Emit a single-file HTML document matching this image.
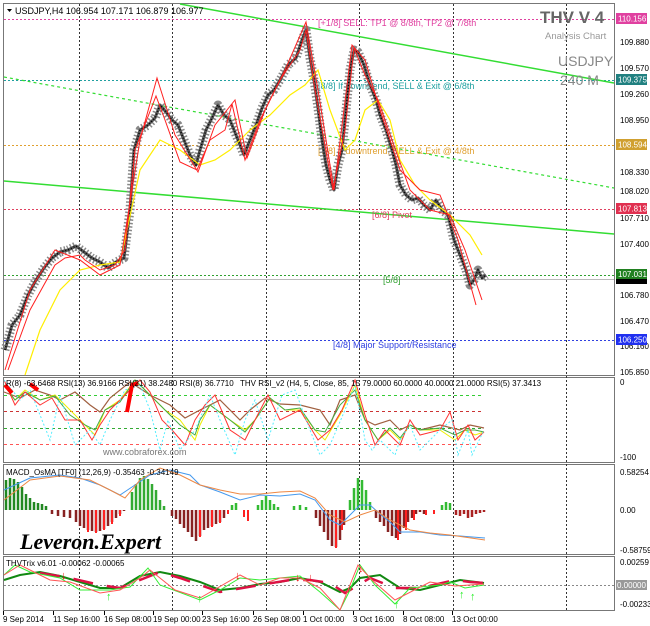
<!DOCTYPE html>
<html><head><meta charset="utf-8"><style>
html,body{margin:0;padding:0;background:#fff;width:650px;height:626px;overflow:hidden}
svg{display:block;font-family:"Liberation Sans",sans-serif}
</style></head><body>
<svg width="650" height="626" viewBox="0 0 650 626" xmlns="http://www.w3.org/2000/svg">
<defs>
<path id="px" d="M5 350L12 325L20 315L28 295L36 280L44 268L52 258L60 252L68 250L76 246L84 252L92 258L100 262L108 268L116 262L124 258L130 210L134 150L140 130L148 125L155 118L160 105L166 112L172 120L178 125L184 140L190 155L196 165L200 150L206 130L212 118L218 105L224 115L230 120L238 140L244 155L250 140L256 125L262 108L268 95L274 90L280 80L288 65L296 58L302 40L306 30L310 58L314 80L318 108L322 140L326 165L330 180L334 190L338 165L342 150L346 110L350 70L354 50L358 52L364 65L370 85L376 100L380 115L386 130L392 150L396 165L400 185L406 195L412 200L418 198L424 205L430 210L436 200L442 210L448 215L454 240L460 255L466 270L470 285L474 280L478 270L482 278L486 275"/>
</defs>
<rect width="650" height="626" fill="#fff"/>
<g fill="none" stroke="#777" stroke-width="1">
<rect x="3.5" y="3.5" width="611" height="372"/>
<rect x="3.5" y="377.5" width="611" height="85"/>
<rect x="3.5" y="464.5" width="611" height="90"/>
<rect x="3.5" y="556.5" width="611" height="54"/>
</g>
<g stroke="#333" stroke-width="1" stroke-dasharray="2,2">
<path d="M79.5 4V610M172.5 4V610M266.5 4V610M359.5 4V610M453.5 4V610M566.5 4V610"/>
</g>
<g stroke-width="1" stroke-dasharray="2,2" fill="none">
<path d="M4 19.5H614" stroke="#e040a0"/>
<path d="M4 80.5H614" stroke="#20a0a0"/>
<path d="M4 145.5H614" stroke="#e0a030"/>
<path d="M4 209.5H614" stroke="#e04060"/>
<path d="M4 275.5H614" stroke="#30a030"/>
<path d="M4 340.5H614" stroke="#3040e0"/>
</g>
<path d="M4 279.5H614" stroke="#bbb" stroke-width="1"/>
<g stroke="#33dd33" fill="none">
<path d="M180 4L614 83" stroke-width="1.5"/>
<path d="M4 77L614 188" stroke-width="1.2" stroke-dasharray="3,3"/>
<path d="M4 181L614 234" stroke-width="1.5"/>
</g>
<g font-size="9">
<text x="318" y="26" fill="#e040a0">[+1/8] SELL: TP1 @ 8/8th, TP2 @ 7/8th</text>
<text x="318" y="89" fill="#20a0a0">[8/8] If downtrend, SELL &amp; Exit @ 6/8th</text>
<text x="318" y="154" fill="#e0a030">[7/8] If downtrend, SELL &amp; Exit @ 4/8th</text>
<text x="372" y="218" fill="#e04060">[6/8] Pivot</text>
<text x="383" y="283" fill="#30a030">[5/8]</text>
<text x="333" y="348" fill="#3040e0">[4/8] Major Support/Resistance</text>
</g>
<use href="#px" fill="none" stroke="#888" stroke-width="9" stroke-linejoin="round" stroke-dasharray="1.5,2"/>
<use href="#px" fill="none" stroke="#555" stroke-width="3" stroke-linejoin="round"/>
<use href="#px" fill="none" stroke="#000" stroke-width="1.5" stroke-dasharray="1,2"/>
<path d="M25 375L40 330L60 290L80 270L100 265L120 262L140 170L160 140L180 150L200 165L215 160L230 150L250 130L270 115L290 95L305 85L318 70L330 110L345 150L355 140L365 110L378 100L390 120L400 160L415 185L430 200L450 215L470 235L482 255" fill="none" stroke="#ffee00" stroke-width="1.2"/>
<path d="M8 370L30 310L55 265L65 258L80 255L85 260L100 270L115 265L125 250L135 150L156 96L165 120L180 162L197 170L210 140L225 130L232 104L245 160L260 120L280 80L300 50L306 30L315 90L333 190L345 130L354 48L365 75L378 100L392 140L410 190L430 210L450 215L465 250L482 300" fill="none" stroke="#ff2020" stroke-width="1"/>
<path d="M5 370L30 290L55 250L80 260L100 275L120 265L140 140L157 78L175 135L198 172L215 125L235 100L247 158L265 110L285 70L306 22L318 90L334 190L352 45L365 60L380 110L400 170L420 190L440 195L458 240L476 305" fill="none" stroke="#ff2020" stroke-width="1"/>
<path d="M7 9L12 9L9.5 12Z" fill="#000"/>
<text x="15" y="14" font-size="9" fill="#000">USDJPY,H4  106.954 107.171 106.879 106.977</text>
<text x="540" y="23" font-size="17" font-weight="bold" fill="#666">THV V 4</text>
<text x="545" y="39" font-size="9.5" fill="#999">Analysis Chart</text>
<text x="558" y="66" font-size="14" fill="#888">USDJPY</text>
<text x="560" y="85" font-size="14" fill="#888">240 M</text>
<g font-size="8" fill="#000">
<text x="620" y="45">109.880</text><text x="620" y="71">109.570</text><text x="620" y="97">109.260</text>
<text x="620" y="123">108.950</text><text x="620" y="175">108.330</text><text x="620" y="194">108.020</text>
<text x="620" y="221">107.710</text><text x="620" y="247">107.400</text><text x="620" y="298">106.780</text>
<text x="620" y="324">106.470</text><text x="620" y="349">106.160</text><text x="620" y="375">105.850</text>
</g>
<g font-size="8" fill="#fff">
<rect x="616" y="13" width="31" height="11" fill="#e040a0"/><text x="618" y="21.5">110.156</text>
<rect x="616" y="74" width="31" height="11" fill="#208080"/><text x="618" y="82.5">109.375</text>
<rect x="616" y="139" width="31" height="11" fill="#d0a030"/><text x="618" y="147.5">108.594</text>
<rect x="616" y="203" width="31" height="11" fill="#e03050"/><text x="618" y="211.5">107.813</text>
<rect x="616" y="269" width="31" height="10" fill="#208020"/><text x="618" y="277">107.031</text>
<rect x="616" y="279" width="31" height="5" fill="#000"/>
<rect x="616" y="334" width="31" height="11" fill="#2030f0"/><text x="618" y="342.5">106.250</text>
</g>
<g stroke-dasharray="3,3" stroke-width="1">
<path d="M4 395.5H484" stroke="#33cc33"/>
<path d="M4 411.5H484" stroke="#cc3333"/>
<path d="M4 428.5H484" stroke="#33aa33"/>
<path d="M4 444.5H484" stroke="#ff5555"/>
</g>
<path d="M4 392L20 398L35 390L50 395L60 400L75 392L90 405L100 412L110 398L130 382L150 395L170 405L185 418L200 410L220 400L240 420L250 410L265 398L280 404L300 405L320 410L330 425L340 400L355 395L365 420L375 425L390 420L400 430L410 425L420 430L440 425L460 430L470 425L484 428" fill="none" stroke="#a06040" stroke-width="1.2"/>
<path d="M4 385L15 400L25 390L40 400L55 395L70 410L85 425L95 435L105 410L120 400L135 380L150 395L165 410L180 420L195 440L200 425L210 405L230 420L245 430L255 420L270 398L285 410L300 410L315 430L325 440L340 415L355 385L365 420L378 440L390 430L400 440L410 425L420 430L440 430L455 440L465 430L475 435L484 432" fill="none" stroke="#eeee00" stroke-width="1"/>
<path d="M4 385L15 400L25 392L40 400L55 396L70 415L85 425L95 430L105 410L120 402L135 380L150 395L165 410L180 425L195 435L200 420L210 405L230 420L245 432L255 420L270 398L285 410L300 408L315 430L325 432L340 405L355 390L365 420L378 440L390 428L400 438L410 425L420 430L440 428L455 435L465 430L475 430L484 432" fill="none" stroke="#44aa44" stroke-width="1"/>
<path d="M4 380L15 405L25 392L40 405L52 398L65 420L80 420L92 440L100 425L110 410L125 395L140 380L150 392L162 420L172 430L185 445L195 420L205 405L215 395L230 430L245 440L255 420L268 395L280 420L300 410L318 440L330 430L342 410L355 380L365 415L375 445L385 430L400 445L410 420L420 435L440 430L450 412L458 440L468 425L475 440L484 432" fill="none" stroke="#ff3333" stroke-width="1"/>
<path d="M4 380L20 400L30 390L50 440L60 395L75 445L90 430L100 445L110 420L125 390L140 385L150 410L160 450L168 420L180 450L195 430L210 395L220 420L235 455L245 420L255 400L268 440L282 395L295 390L310 430L320 455L330 445L345 410L355 385L365 440L372 450L380 440L395 455L400 440L410 425L420 450L440 430L452 420L458 455L468 430L472 455L484 430" fill="none" stroke="#55eeff" stroke-width="1" stroke-dasharray="2,2"/>
<path d="M5 385L12 393M30 384L38 390M127 412L132 385L138 383" fill="none" stroke="#ff0000" stroke-width="4"/>
<g font-size="8" fill="#000">
<text x="6" y="386">R(8) -63.6468  RSI(13) 36.9166  RSI(21) 38.2480  RSI(8) 36.7710</text>
<text x="240" y="386">THV RSI_v2   (H4, 5, Close, 85, 15 79.0000 60.0000 40.0000 21.0000  RSI(5) 37.3413</text>
<text x="620" y="385">0</text><text x="620" y="460">-100</text>
</g>
<text x="103" y="455" font-size="9" fill="#777">www.cobraforex.com</text>
<g>
<path d="M6 510V480M10 510V478M14 510V479M18 510V482M22 510V487M26 510V494M30 510V498M34 510V502M38 510V503M42 510V504M46 510V506M50 510V510" stroke="#228822" stroke-width="2.5"/>
<path d="M52 510V514M58 510V516M64 510V517M70 510V518M76 510V522M80 510V526M84 510V528M88 510V530M92 510V531M96 510V532M100 510V531M104 510V529M108 510V526M112 510V522M116 510V518M120 510V514M124 510V511" stroke="#882222" stroke-width="2.5"/>
<path d="M88 510V532M96 510V533M104 510V530M112 510V524M120 510V516" stroke="#ff2222" stroke-width="2"/>
<path d="M132 510V492M136 510V484M140 510V478M144 510V476M148 510V479M152 510V484M156 510V490M160 510V500M164 510V506" stroke="#33aa33" stroke-width="2.5"/>
<path d="M172 510V516M176 510V519M180 510V524M184 510V528M188 510V532M192 510V537M196 510V541M200 510V536M204 510V530M208 510V528M212 510V526M216 510V524M220 510V522M224 510V518" stroke="#882222" stroke-width="2.5"/>
<path d="M200 510V537M212 510V527M220 510V523M228 510V514M244 510V517M248 510V521" stroke="#ff2222" stroke-width="2"/>
<path d="M232 510V505M236 510V503M258 510V505M262 510V500M266 510V496M270 510V500M274 510V504M278 510V507M294 510V506M300 510V505M306 510V507" stroke="#33bb33" stroke-width="2.5"/>
<path d="M316 510V518M320 510V526M324 510V532M328 510V540M332 510V546M336 510V547M340 510V540M344 510V525" stroke="#882222" stroke-width="2.5"/>
<path d="M336 510V548M342 510V530" stroke="#ff2222" stroke-width="2"/>
<path d="M350 510V500M354 510V488M358 510V478M362 510V480M366 510V490M370 510V502" stroke="#33bb33" stroke-width="2.5"/>
<path d="M376 510V518M380 510V522M384 510V526M388 510V532M392 510V536M396 510V538M400 510V534M404 510V528M408 510V522M412 510V518M416 510V514M420 510V512M424 510V514" stroke="#882222" stroke-width="2.5"/>
<path d="M398 510V540M406 510V530M414 510V520M426 510V515M434 510V514" stroke="#ff2222" stroke-width="2"/>
<path d="M442 510V505M446 510V502M450 510V503" stroke="#33bb33" stroke-width="2.5"/>
<path d="M456 510V515M460 510V516M464 510V514M468 510V518M472 510V517M476 510V514M480 510V513M484 510V512" stroke="#aa2222" stroke-width="2.5"/>
</g>
<path d="M4 490L30 478L60 475L80 478L100 485L120 495L135 485L150 475L170 470L190 475L200 485L220 492L240 500L260 495L280 496L300 494L315 500L330 520L340 525L350 515L360 505L370 505L380 514L390 522L400 532L420 532L440 535L460 536L485 538" fill="none" stroke="#4499ee" stroke-width="1"/>
<path d="M4 500L30 480L60 476L90 480L110 490L125 498L140 480L160 468L180 475L200 485L220 490L240 494L260 494L280 492L300 491L315 498L330 515L345 522L360 515L375 510L390 520L410 530L430 533L450 535L485 540" fill="none" stroke="#ee8844" stroke-width="1"/>
<text x="6" y="475" font-size="8" fill="#000">MACD_OsMA [TF0] (12,26,9) -0.35463 -0.34149</text>
<g font-size="8" fill="#000"><text x="620" y="475">0.58254</text><text x="620" y="513">0.00</text><text x="620" y="553">-0.58759</text></g>
<text x="20" y="549" font-size="22" font-style="italic" font-weight="bold" font-family="Liberation Serif,serif" fill="#000">Leveron.Expert</text>
<path d="M4 585.5H614" stroke="#888" stroke-dasharray="2,2"/>
<path d="M4 580L20 575L40 572L60 576L80 582L100 588L120 588L140 576L160 572L180 576L200 582L220 590L240 588L260 584L280 582L300 578L320 582L340 592L350 588L360 578L380 575L400 588L420 590L440 585L460 580L484 583" fill="none" stroke="#118811" stroke-width="2"/>
<path d="M40 573L70 578L100 585L120 588L160 572L180 578L220 592L260 585L290 580L310 580L330 583L345 593L370 578L395 588L420 588L455 580L470 582L484 583" fill="none" stroke="#dd1144" stroke-width="2.5" stroke-dasharray="20,14"/>
<path d="M4 575L15 565L30 572L60 578L80 590L110 590L130 587L148 568L160 585L200 600L220 590L240 578L260 580L280 578L300 576L320 592L340 610L350 590L360 565L375 585L395 604L410 588L440 585L450 582L465 588L484 585" fill="none" stroke="#33ee33" stroke-width="1"/>
<path d="M4 575L20 565L50 580L70 582L100 593L120 590L140 578L150 570L175 590L200 598L240 575L260 585L280 578L300 578L320 588L340 610L358 565L372 580L395 600L430 582L455 586L484 584" fill="none" stroke="#ff5555" stroke-width="1"/>
<g font-size="11" font-weight="bold">
<text x="61" y="579" fill="#ee1111">↓</text><text x="235" y="579" fill="#ee1111">↓</text><text x="295" y="581" fill="#ee1111">↓</text><text x="308" y="581" fill="#ee1111">↓</text><text x="358" y="572" fill="#ee1111">↓</text>
<text x="106" y="600" fill="#22ee22">↑</text><text x="197" y="602" fill="#22ee22">↑</text><text x="394" y="608" fill="#22ee22">↑</text><text x="459" y="598" fill="#22ee22">↑</text><text x="470" y="600" fill="#22ee22">↑</text>
</g>
<text x="6" y="566" font-size="8" fill="#000">THVTrix v6.01 -0.00062 -0.00065</text>
<g font-size="8" fill="#000"><text x="620" y="565">0.00259</text><text x="620" y="607">-0.00233</text></g>
<rect x="616" y="580" width="31" height="10" fill="#999"/><text x="617" y="588" font-size="8" fill="#fff">0.00000</text>
<g font-size="8" fill="#000">
<text x="3" y="622">9 Sep 2014</text><text x="53" y="622">11 Sep 16:00</text><text x="104" y="622">16 Sep 08:00</text>
<text x="153" y="622">19 Sep 00:00</text><text x="202" y="622">23 Sep 16:00</text><text x="253" y="622">26 Sep 08:00</text>
<text x="303" y="622">1 Oct 00:00</text><text x="353" y="622">3 Oct 16:00</text><text x="403" y="622">8 Oct 08:00</text>
<text x="452" y="622">13 Oct 00:00</text>
</g>
<path d="M3.5 611V615M53.5 611V615M104.5 611V615M153.5 611V615M202.5 611V615M253.5 611V615M303.5 611V615M353.5 611V615M403.5 611V615M452.5 611V615" stroke="#000"/>
</svg>
</body></html>
